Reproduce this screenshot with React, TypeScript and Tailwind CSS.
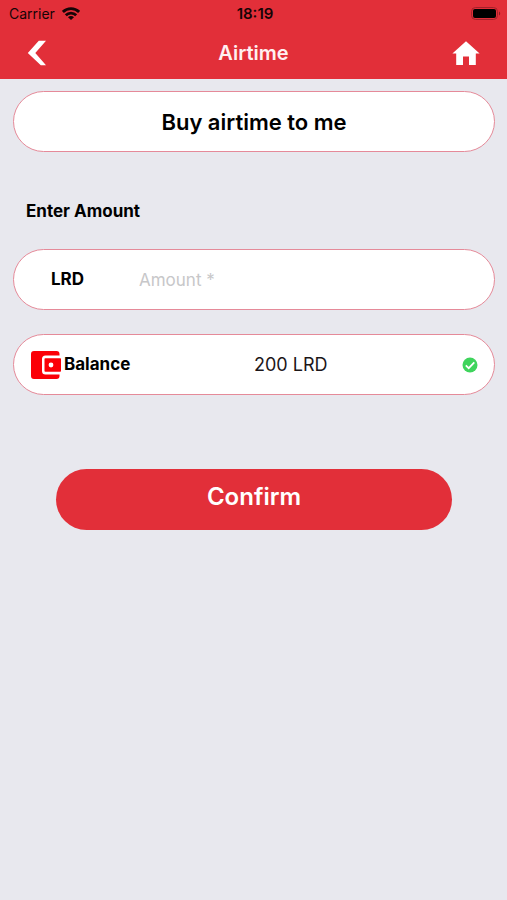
import type { ReactNode } from 'react';

function WifiIcon() {
  return (
    <svg viewBox="0 0 18 13" className="w-[18px] h-[13px]" fill="none" stroke="#160406" strokeWidth="2.8" aria-hidden="true">
      <path d="M0.9 4.9a11.6 11.6 0 0 1 16.2 0" />
      <path d="M3.8 8.300a7.3 7.3 0 0 1 10.400 0" />
      <path d="M9 13 6 10.200a4.200 4.200 0 0 1 6 0z" fill="#160406" stroke="none" />
    </svg>
  );
}

function BatteryIcon() {
  return (
    <svg viewBox="0 0 30 14" className="w-[30px] h-[14px]" aria-hidden="true">
      <rect x="0.5" y="0.5" width="26" height="12" rx="4" fill="none" stroke="#a3212a" />
      <rect x="2" y="2" width="23" height="9" rx="2" fill="#000" />
      <path d="M28 4.500c1.600.6 1.600 3.400 0 4z" fill="#8a1c24" />
    </svg>
  );
}

function BackIcon() {
  return (
    <svg viewBox="0 0 20 26" className="w-5 h-[26px]" aria-hidden="true">
      <path d="M11.800.8H19L8.300 13 19 25.200H13.800L0.800 13z" fill="#fff" />
    </svg>
  );
}

function HomeIcon() {
  return (
    <svg viewBox="0 0 28 24" className="w-7 h-6" aria-hidden="true">
      <path d="M14 0.300 27.600 12.600H23.800V23.900H17V15.500H11V23.900H4.200V12.600H0.400z" fill="#fff" />
    </svg>
  );
}

function WalletIcon() {
  return (
    <svg viewBox="0 0 30 28" className="w-[30px] h-7" aria-hidden="true">
      <path
        d="M3 0h22.500a3 3 0 0 1 3 3v1.500H14.500a3.500 3.500 0 0 0-3.500 3.500v12a3.500 3.500 0 0 0 3.500 3.500H28.500V25a3 3 0 0 1-3 3H3a3 3 0 0 1-3-3V3a3 3 0 0 1 3-3z"
        fill="#fb0007"
      />
      <rect x="13.500" y="7.300" width="16.500" height="13.400" rx="0.800" fill="#fb0007" />
      <circle cx="20" cy="14" r="2.400" fill="#fff" />
    </svg>
  );
}

function CheckIcon() {
  return (
    <svg viewBox="0 0 16 16" className="w-4 h-4" role="img" aria-label="Selected">
      <circle cx="8" cy="8" r="7.500" fill="#3fd45c" />
      <path d="M3.800 8.300 6.700 11.200 12.300 5.300" fill="none" stroke="#fff" strokeWidth="1.700" />
    </svg>
  );
}

function Pill({ children }: { children: ReactNode }) {
  return (
    <div className="flex items-center h-[61px] rounded-full border border-[#e58a99] bg-white">
      {children}
    </div>
  );
}

export default function App() {
  return (
    <div className="min-h-screen bg-[#e8e8ee] font-['Inter','Liberation_Sans',sans-serif] text-black">
      <header className="bg-[#e22f39]">
        {/* Status bar */}
        <div className="grid grid-cols-3 items-center h-7 pl-[9px] pr-1.5 text-sm text-[#160406]">
          <div className="flex items-center gap-[7px] pb-px">
            <span>Carrier</span>
            <WifiIcon />
          </div>
          <span className="text-center text-[15px] font-semibold">18:19</span>
          <div className="flex justify-end">
            <BatteryIcon />
          </div>
        </div>
        <nav className="grid grid-cols-3 items-center h-[51px] px-[27px] pb-0.5">
          <button type="button" aria-label="Back" className="justify-self-start">
            <BackIcon />
          </button>
          <h1 className="text-center text-xl font-semibold text-[#fff0f1]">Airtime</h1>
          <a href="#home" aria-label="Home" className="justify-self-end">
            <HomeIcon />
          </a>
        </nav>
      </header>

      <main className="pl-[13px] pr-3 pt-3">
        <button
          type="button"
          className="block w-full h-[61px] pt-0.5 rounded-full border border-[#e58a99] bg-white text-[22px] font-semibold"
        >
          Buy airtime to me
        </button>

        <label htmlFor="amount" className="block mt-[49px] mb-7 pl-[13px] text-[17px] leading-5 font-bold">
          Enter Amount
        </label>

        <div className="flex flex-col gap-6">
          <Pill>
            <span className="w-[88px] ml-[37px] text-[17px] font-bold">LRD</span>
            <input
              id="amount"
              type="text"
              inputMode="decimal"
              placeholder="Amount *"
              className="flex-1 min-w-0 mr-8 pt-0.5 bg-transparent text-[17px] outline-none placeholder:text-[#c7c7c9]"
            />
          </Pill>
          <Pill>
            <div className="flex w-1/2 items-center gap-[3px] pl-[17px]">
              <WalletIcon />
              <span className="pt-px text-[17px] font-bold">Balance</span>
            </div>
            <span className="text-lg text-[#1c1618]">200 LRD</span>
            <div className="flex flex-1 justify-end pr-4">
              <CheckIcon />
            </div>
          </Pill>
        </div>

        <button
          type="button"
          className="block mt-[74px] mx-[43px] w-[calc(100%-86px)] h-[61px] pb-1.5 rounded-full bg-[#e22f39] text-2xl font-semibold text-white"
        >
          Confirm
        </button>
      </main>
    </div>
  );
}
